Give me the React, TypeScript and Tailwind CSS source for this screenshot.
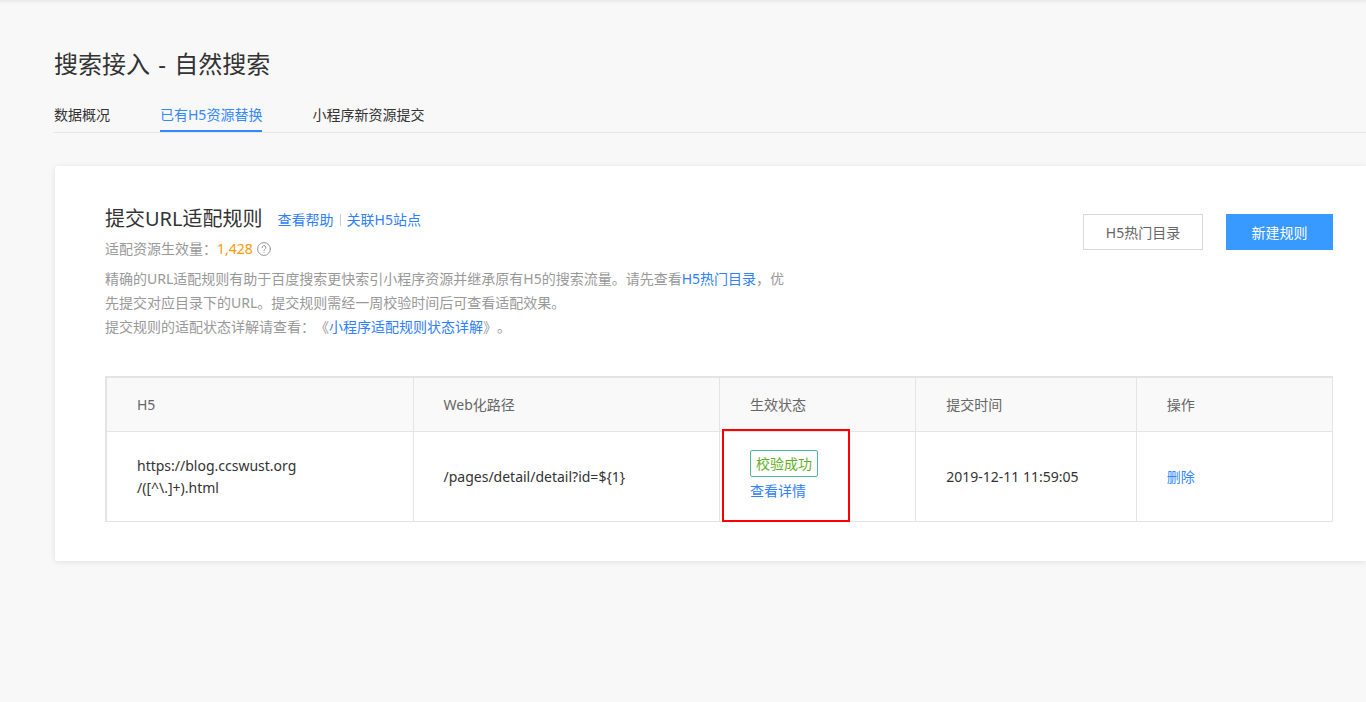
import type { ReactNode } from "react";

type Rule = {
  id: number;
  h5: string[];
  path: string;
  status: string;
  submittedAt: string;
};

const TABS = ["数据概况", "已有H5资源替换", "小程序新资源提交"];
const ACTIVE_TAB = "已有H5资源替换";

const COLUMNS = [
  { title: "H5", width: "w-[25%]" },
  { title: "Web化路径", width: "w-[25%]" },
  { title: "生效状态", width: "w-[16%]" },
  { title: "提交时间", width: "w-[18%]" },
  { title: "操作", width: "w-[16%]" },
];

const RULES: Rule[] = [
  {
    id: 1,
    h5: ["https://blog.ccswust.org", "/([^\\.]+).html"],
    path: "/pages/detail/detail?id=${1}",
    status: "校验成功",
    submittedAt: "2019-12-11 11:59:05",
  },
];

export default function App() {
  return (
    <div className="min-h-screen bg-[#f8f8f8] text-sm text-[#333] font-['Noto_Sans','Noto_Sans_CJK_SC',sans-serif] [text-spacing-trim:space-all]">
      <div className="h-1 bg-linear-to-b from-[#e9e9e9] to-[#f8f8f8]" />

      <main className="pt-10 pl-[54px]">
        <h1 className="text-2xl leading-10 font-normal">
          搜索接入 <span className="mx-0.5">-</span> 自然搜索
        </h1>

        {/* Tabs */}
        <nav className="mt-4 flex gap-[50px] border-b border-[#e6e6e6]">
          {TABS.map((tab) => (
            <a
              key={tab}
              href="#"
              className={
                tab === ACTIVE_TAB
                  ? "border-b-2 border-[#3388ff] pt-1 pb-1 leading-[22px] text-[#3388ff]"
                  : "border-b-2 border-transparent pt-1 pb-1 leading-[22px]"
              }
            >
              {tab}
            </a>
          ))}
        </nav>

        <section className="mt-[33px] ml-px rounded-l-xs bg-white pt-[37px] pr-[33px] pb-[39px] pl-[50px] shadow-[0_1px_6px_rgba(0,0,0,0.1)]">
          <div className="flex items-start justify-between">
            <div className="max-w-[690px]">
              <div className="flex items-center">
                <h2 className="text-xl leading-8 font-normal">提交URL适配规则</h2>
                <div className="ml-[15px] flex items-center pt-0.5 leading-6">
                  <TextLink>查看帮助</TextLink>
                  <span className="mx-1.5 h-3 w-px bg-[#ccc]" />
                  <TextLink>关联H5站点</TextLink>
                </div>
              </div>
              <div className="mt-0.5 flex items-center leading-6 text-[#999]">
                适配资源生效量：
                <span className="text-[#ff9900]">1,428</span>
                <HelpIcon />
              </div>
              <p className="mt-1.5 leading-6 text-[#999]">
                精确的URL适配规则有助于百度搜索更快索引小程序资源并继承原有H5的搜索流量。请先查看
                <TextLink>H5热门目录</TextLink>，优先提交对应目录下的URL。提交规则需经一周校验时间后可查看适配效果。
                <br />
                提交规则的适配状态详解请查看：《<TextLink>小程序适配规则状态详解</TextLink>》。
              </p>
            </div>

            <div className="flex gap-[23px] pt-[11px]">
              <button className="h-9 w-[120px] border border-[#d9d9d9] bg-white pt-0.5 text-[#666]">
                H5热门目录
              </button>
              <button className="h-9 w-[107px] bg-[#3899ff] pt-0.5 text-white">新建规则</button>
            </div>
          </div>

          <table className="mt-[37px] w-full table-fixed border-separate border-spacing-0 border-t-2 border-l-2 border-[#e4e4e4] text-left">
            <thead>
              <tr className="h-[54px] bg-[#f9f9f9] text-[#666]">
                {COLUMNS.map((col) => (
                  <th
                    key={col.title}
                    className={`${col.width} border-r border-b border-[#e4e4e4] px-[30px] font-normal`}
                  >
                    {col.title}
                  </th>
                ))}
              </tr>
            </thead>
            <tbody>
              {RULES.map((rule) => (
                <RuleRow key={rule.id} rule={rule} />
              ))}
            </tbody>
          </table>
        </section>
      </main>
    </div>
  );
}

function RuleRow({ rule }: { rule: Rule }) {
  const cell = "border-r border-b border-[#e4e4e4] px-[30px]";

  return (
    <tr className="h-[90px]">
      <td className={`${cell} leading-[22px]`}>
        {rule.h5.map((line) => (
          <div key={line}>{line}</div>
        ))}
      </td>
      <td className={cell}>{rule.path}</td>
      <td className={`${cell} relative`}>
        <div className="flex flex-col items-start gap-1 pb-0.5">
          <span className="rounded-xs border border-[#4dbd94] px-[5px] leading-[25px] text-[#62b01e]">
            {rule.status}
          </span>
          <TextLink>{rule.status === "校验成功" ? "查看详情" : "查看原因"}</TextLink>
        </div>
        {/* Highlight frame over the status */}
        <div className="pointer-events-none absolute -top-[3px] left-0.5 h-[93px] w-32 border-2 border-[#f00]" />
      </td>
      <td className={cell}>{rule.submittedAt}</td>
      <td className={cell}>
        <button className="text-[#3388ff]">删除</button>
      </td>
    </tr>
  );
}

function TextLink({ children }: { children: ReactNode }) {
  return (
    <a href="#" className="text-[#2f80ff]">
      {children}
    </a>
  );
}

function HelpIcon() {
  return (
    <svg
      viewBox="0 0 14 14"
      className="ml-1 size-3.5"
      fill="none"
      stroke="#999"
      strokeLinecap="round"
    >
      <circle cx="7" cy="7" r="6.4" />
      <path d="M5.1 5.6a1.9 1.9 0 1 1 2.8 1.6c-.6.4-.9.7-.9 1.3" />
      <path d="M7 10.3v.2" />
    </svg>
  );
}
